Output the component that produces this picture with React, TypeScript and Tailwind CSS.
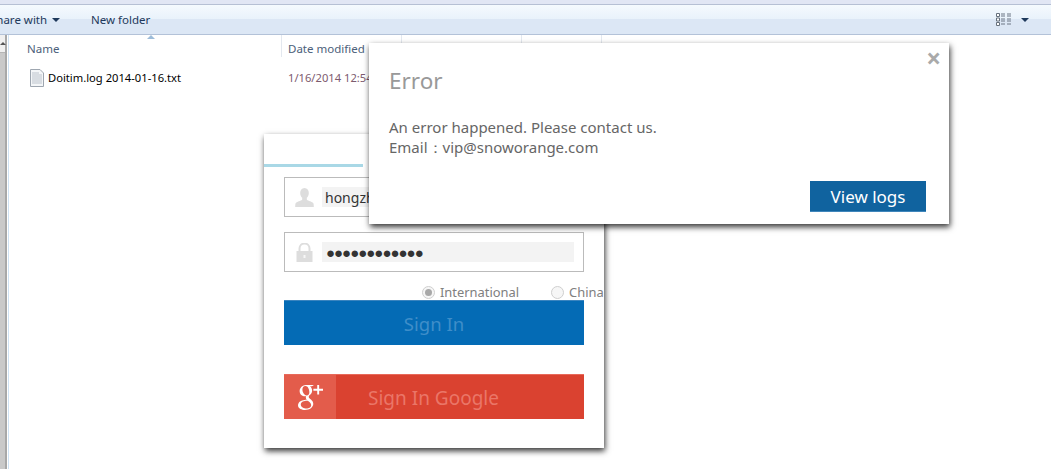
import { TfiGoogle } from 'react-icons/tfi'

const font = "font-['Noto_Sans','Open_Sans',sans-serif]"

function FileIcon() {
  return (
    <svg width="14" height="18" viewBox="0 0 14 18" className="shrink-0">
      <path d="M.5 .5H10L13.500 4V17.500H.5Z" fill="#f4f6f8" stroke="#9ea6b0" />
      <path d="M2 4H9M2 6H12M2 8H12M2 10H12M2 12H12M2 14H12" stroke="#bcc3cc" />
    </svg>
  )
}

function ViewsIcon() {
  return (
    <svg width="16" height="13" viewBox="0 0 16 13">
      <path d="M.5 .5h3v3h-3zM.5 5h3v3h-3zM.5 9.500h3v3h-3z" fill="#fff" stroke="#66707c" />
      <path d="M5 1h4M11 1h4M5 3h4M11 3h4M5 6h4M11 6h4M5 8h4M11 8h4M5 11h4M11 11h4" stroke="#6d7785" />
    </svg>
  )
}

function Caret() {
  return <span className="h-0 w-0 border-x-[4px] border-t-[4px] border-x-transparent border-t-[#1e395b]" />
}

function ScrollStrip() {
  return (
    <div className="flex w-[9px] shrink-0 border-r border-[#cfe2f3] bg-white">
      <div className="flex w-[7px] flex-col border-r-2 border-[#a8a8a8]">
        <div className="flex h-[18px] items-center justify-center border-b border-[#b5b5b5] bg-[#f0f0f0]">
          <span className="h-0 w-0 border-x-[3px] border-b-[3px] border-x-transparent border-b-[#555555]" />
        </div>
        <div className="flex-1 bg-[#c9c9c9]" />
      </div>
    </div>
  )
}

function Explorer() {
  return (
    <div className="flex h-[469px] flex-col bg-white">
      <div className="h-1 shrink-0 bg-[#e1e6f4]" />
      <div className="h-px shrink-0 bg-[#b6c0d4]" />
      <div className="flex h-[30px] shrink-0 items-center justify-between border-b border-[#b3c2d8] bg-[linear-gradient(#f5fafe_0%,#e9f2fb_48%,#dce7f5_50%,#dce7f5_100%)] pr-[22px] text-[11.500px] text-[#1e395b]">
        <div className="flex items-center">
          <span className="ml-[-10px] w-[62px] whitespace-nowrap">Share with</span>
          <span className="flex"><Caret /></span>
          <span className="ml-[31px]">New folder</span>
        </div>
        <div className="flex items-center gap-[9px]">
          <ViewsIcon />
          <Caret />
        </div>
      </div>
      <div className="flex min-h-0 flex-1">
        <ScrollStrip />
        <div className="min-w-0 flex-1 bg-white">
          <div className="relative flex h-[22px] text-[11.500px] text-[#4c607a]">
            <div className="relative w-[273px] border-r border-[#e3e8ef] pl-[18px] pt-[5px]">
              Name
              <span className="absolute left-[138px] top-0 h-0 w-0 border-x-[4px] border-b-[4px] border-x-transparent border-b-[#9dbcd9]" />
            </div>
            <div className="w-[120px] border-r border-[#e3e8ef] pl-[6px] pt-[5px]">Date modified</div>
            <div className="w-[120px] border-r border-[#e3e8ef]" />
            <div className="w-[80px] border-r border-[#e3e8ef]" />
          </div>
          <div className="mt-[9px] flex h-[24px] items-center text-[11.200px]">
            <div className="flex w-[273px] items-center gap-[4px] pl-[21px] text-black">
              <FileIcon />
              <span className="whitespace-nowrap">Doitim.log 2014-01-16.txt</span>
            </div>
            <div className="whitespace-nowrap pl-[6px] text-[#7d5a6e]">1/16/2014 12:54 PM</div>
          </div>
        </div>
      </div>
    </div>
  )
}

function UserIcon() {
  return (
    <svg width="19" height="19" viewBox="0 0 19 19" className="shrink-0">
      <path d="M9.500 0c2.800 0 4.300 2.200 4.300 5 0 2-.8 3.800-2 4.800v1.700c0 1 4.200 1.600 6.200 3.300.6.500.8 2.200.8 4.200H.2c0-2 .2-3.700.8-4.200 2-1.700 6.200-2.300 6.200-3.300V9.800c-1.200-1-2-2.800-2-4.800 0-2.800 1.500-5 4.300-5z" fill="#dddddd" />
    </svg>
  )
}

function LockIcon() {
  return (
    <svg width="17" height="19" viewBox="0 0 17 19" className="shrink-0">
      <path d="M3.500 8V5.500a5 5 0 0 1 10 0V8" fill="none" stroke="#dddddd" strokeWidth="2" />
      <path d="M.5 8h16v11H.5z" fill="#dddddd" />
      <path d="M7.500 12h2v3h-2z" fill="#f7f7f7" />
    </svg>
  )
}

function Field({ icon, children }: { icon: React.ReactNode; children: React.ReactNode }) {
  return (
    <div className="flex h-10 w-[300px] items-center border border-[#bbbbbb] bg-white">
      <div className="flex w-[37px] shrink-0 justify-center pl-px">{icon}</div>
      <div className="flex h-5 w-[252px] items-center bg-[#f3f3f3] pl-[3px] text-[14px] text-[#333333]">
        {children}
      </div>
    </div>
  )
}

function Radio({ checked, label }: { checked?: boolean; label: string }) {
  return (
    <div className="flex items-center gap-[5px]">
      <span className="flex h-[13px] w-[13px] items-center justify-center rounded-full border border-[#cfcfcf] bg-[#f6f6f6]">
        {checked && <span className="h-[7px] w-[7px] rounded-full bg-[#a8a8a8]" />}
      </span>
      <span>{label}</span>
    </div>
  )
}

function LoginCard() {
  return (
    <div className="absolute left-[264px] top-[134px] h-[314px] w-[340px] overflow-hidden bg-white">
      <div className="h-[30px]" />
      <div className="h-[3px] w-[99px] bg-[#a9d8e6]" />
      <div className="flex flex-col px-5 pt-[10px]">
        <Field icon={<UserIcon />}>hongzhen</Field>
        <div className="mt-[15px]">
          <Field icon={<LockIcon />}>
            <span className="pl-[1px] text-[15px] leading-none tracking-[-1px] text-[#333333]">●●●●●●●●●●●●</span>
          </Field>
        </div>
        <div className="mt-[12px] flex h-[16px] gap-[32px] whitespace-nowrap pl-[138px] text-[12.900px] leading-[16px] text-[#808080]">
          <Radio checked label="International" />
          <Radio label="China" />
        </div>
        <div className="flex h-[45px] w-[300px] items-center justify-center border-t border-[#3a84bf] bg-[#046bb5] pt-[1px] text-[18.500px] text-[#3f8ec9]">
          Sign In
        </div>
        <div className="mt-[29px] flex h-[45px] w-[300px] items-stretch border-t border-[#e8695a] bg-[#da4230] text-[19px] text-[#ea7668]">
          <div className="flex w-[52px] items-center justify-center bg-[#e35c4b] text-white">
            <TfiGoogle size={25} />
          </div>
          <div className="flex flex-1 items-center pl-[32px] pt-[3px]">Sign In Google</div>
        </div>
      </div>
    </div>
  )
}

function ErrorDialog() {
  return (
    <div className="absolute left-[369px] top-[43px] flex h-[181px] w-[580px] flex-col bg-white shadow-[1px_3px_6px_rgba(0,0,0,0.8)]">
      <span className="absolute right-[8px] top-[3px] text-[26px] font-bold leading-[24px] text-[#aaaaaa]">×</span>
      <div className="pl-5 pt-[21px] text-[22.500px] leading-[34px] text-[#999999]">Error</div>
      <div className="pl-5 pt-[19px] text-[15px] leading-[20px] text-[#666666]">
        <p>An error happened. Please contact us.</p>
        <p>Email：vip@snoworange.com</p>
      </div>
      <div className="flex flex-1 items-end justify-end pb-3 pr-[23px]">
        <div className="flex h-[31px] w-[116px] items-center justify-center border-b border-[#3f86bb] bg-[#10639f] pt-[1px] text-[17px] text-white">
          View logs
        </div>
      </div>
    </div>
  )
}

export default function App() {
  return (
    <div className={`relative h-[469px] w-[1051px] overflow-hidden ${font}`}>
      <Explorer />
      <div className="absolute left-[264px] top-[134px] h-[314px] w-[340px] shadow-[1px_3px_6px_rgba(0,0,0,0.8)]" />
      <LoginCard />
      <ErrorDialog />
    </div>
  )
}
